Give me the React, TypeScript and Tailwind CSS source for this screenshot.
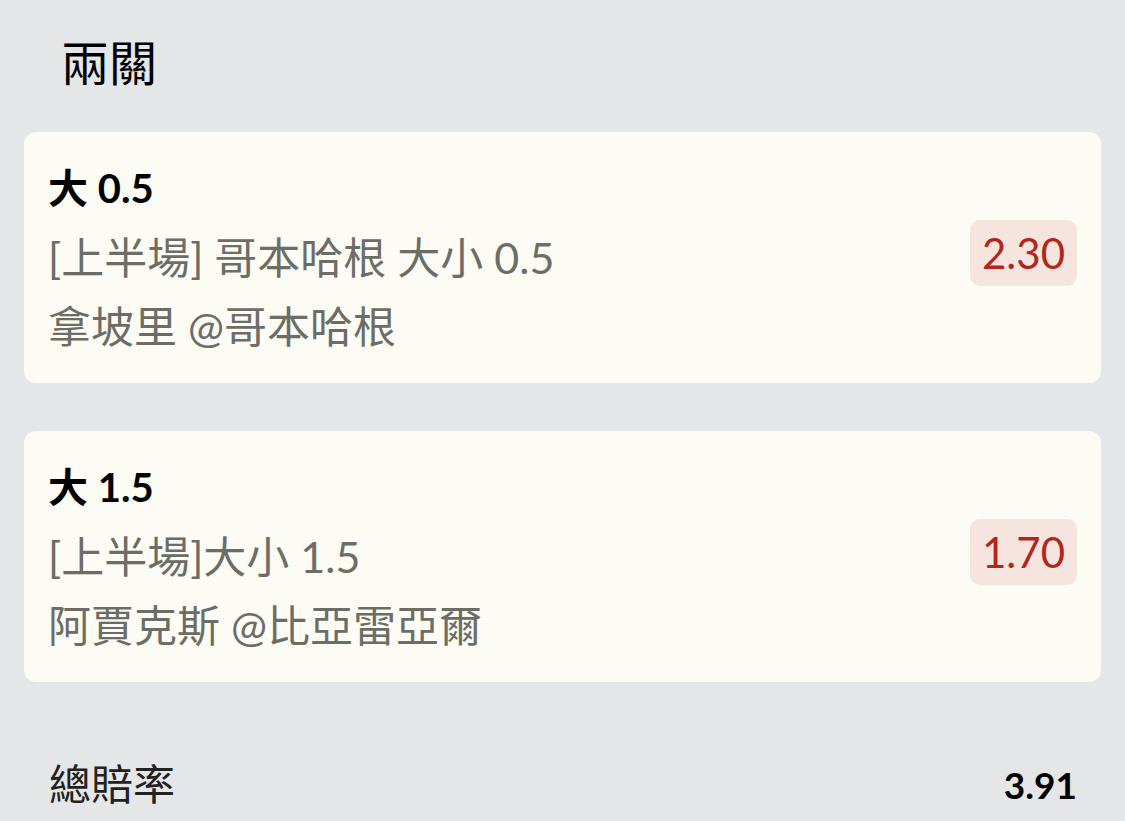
import React from 'react';

type Leg = {
  pick: string;
  market: string;
  match: string;
  odds: string;
};

const legs: Leg[] = [
  { pick: '大 0.5', market: '[上半場] 哥本哈根 大小 0.5', match: '拿坡里 @哥本哈根', odds: '2.30' },
  { pick: '大 1.5', market: '[上半場]大小 1.5', match: '阿賈克斯 @比亞雷亞爾', odds: '1.70' },
];

const font = "font-['Lato','Noto_Sans_CJK_TC',sans-serif]";

function LegCard({ leg }: { leg: Leg }) {
  return (
    <div className="flex items-center justify-between rounded-xl bg-[#fcfcf4] pl-6 pr-6 py-[22px]">
      <div className="flex flex-col leading-[69px]">
        <p className="text-[40px] font-bold text-black">{leg.pick}</p>
        <p className="text-[43px] text-[#6d6d67]">{leg.market}</p>
        <p className="text-[43px] text-[#6d6d67]">{leg.match}</p>
      </div>
      <span className="-mt-[10px] rounded-[10px] bg-[#f5e5de] px-[12px] text-[42px] leading-[66px] text-[#b3261c]">
        {leg.odds}
      </span>
    </div>
  );
}

export default function App() {
  return (
    <div className={`min-h-[821px] w-full bg-[#e5e6e8] px-6 ${font}`}>
      {/* Header */}
      <h1 className="pl-[37px] pt-[28px] pb-[35px] text-[48px] leading-[69px] text-black">兩關</h1>

      {/* Legs */}
      <div className="flex flex-col gap-12">
        {legs.map(l => (
          <LegCard key={l.pick} leg={l} />
        ))}
      </div>

      {/* Total */}
      <div className="mt-[68px] flex items-center justify-between pl-[25px] pr-6 leading-[69px]">
        <span className="text-[42px] text-[#222]">總賠率</span>
        <span className="text-[37px] font-bold text-black">3.91</span>
      </div>
    </div>
  );
}
